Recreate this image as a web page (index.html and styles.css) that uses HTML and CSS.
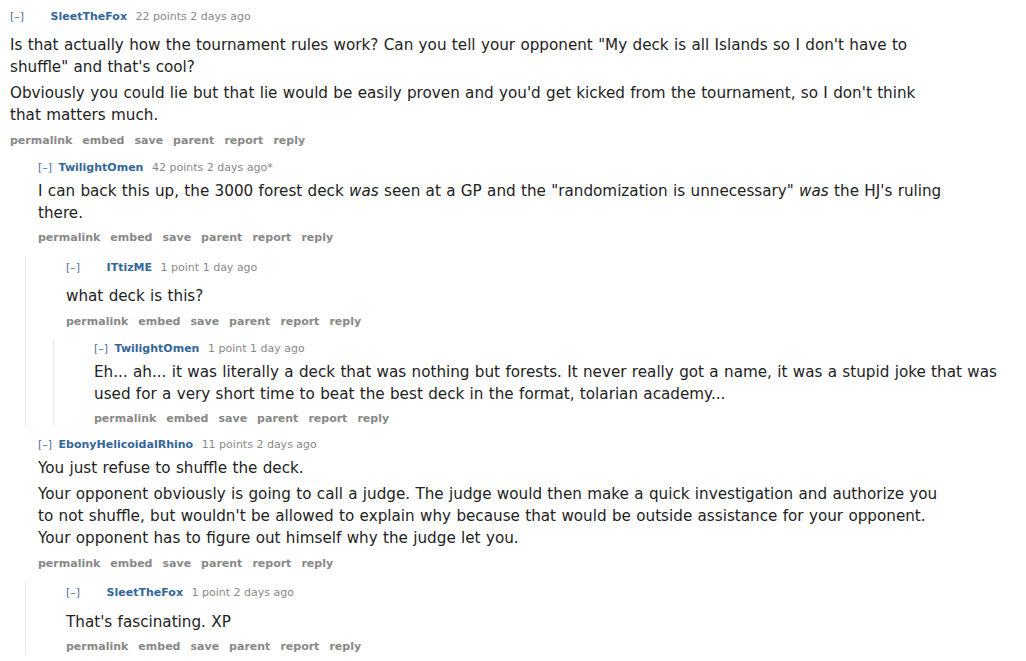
FILE: index.html
```html
<!DOCTYPE html>
<html>
<head>
<meta charset="utf-8">
<link rel="stylesheet" href="styles.css">
</head>
<body>
<div class="sitetable">

<div class="comment">
<div class="entry wide">
<p class="tagline"><a class="expand">[–]</a> <a class="author">SleetTheFox</a> <span>22 points</span> <span>2 days ago</span></p>
<div class="md">
<p>Is that actually how the tournament rules work? Can you tell your opponent "My deck is all Islands so I don't have to shuffle" and that's cool?</p>
<p>Obviously you could lie but that lie would be easily proven and you'd get kicked from the tournament, so I don't think that matters much.</p>
</div>
<ul class="buttons"><li>permalink</li><li>embed</li><li>save</li><li>parent</li><li>report</li><li>reply</li></ul>
</div>
<div class="child">

<div class="comment">
<div class="entry">
<p class="tagline"><a class="expand">[–]</a> <a class="author">TwilightOmen</a> <span>42 points</span> <span>2 days ago*</span></p>
<div class="md">
<p>I can back this up, the 3000 forest deck <em>was</em> seen at a GP and the "randomization is unnecessary" <em>was</em> the HJ's ruling there.</p>
</div>
<ul class="buttons"><li>permalink</li><li>embed</li><li>save</li><li>parent</li><li>report</li><li>reply</li></ul>
</div>
<div class="child">

<div class="comment">
<div class="entry wide">
<p class="tagline"><a class="expand">[–]</a> <a class="author">ITtizME</a> <span>1 point</span> <span>1 day ago</span></p>
<div class="md">
<p>what deck is this?</p>
</div>
<ul class="buttons"><li>permalink</li><li>embed</li><li>save</li><li>parent</li><li>report</li><li>reply</li></ul>
</div>
<div class="child">

<div class="comment">
<div class="entry">
<p class="tagline"><a class="expand">[–]</a> <a class="author">TwilightOmen</a> <span>1 point</span> <span>1 day ago</span></p>
<div class="md">
<p>Eh... ah... it was literally a deck that was nothing but forests. It never really got a name, it was a stupid joke that was used for a very short time to beat the best deck in the format, tolarian academy...</p>
</div>
<ul class="buttons"><li>permalink</li><li>embed</li><li>save</li><li>parent</li><li>report</li><li>reply</li></ul>
</div>
</div>

</div>
</div>

</div>
</div>

<div class="comment">
<div class="entry">
<p class="tagline"><a class="expand">[–]</a> <a class="author">EbonyHelicoidalRhino</a> <span>11 points</span> <span>2 days ago</span></p>
<div class="md">
<p>You just refuse to shuffle the deck.</p>
<p>Your opponent obviously is going to call a judge. The judge would then make a quick investigation and authorize you to not shuffle, but wouldn't be allowed to explain why because that would be outside assistance for your opponent. Your opponent has to figure out himself why the judge let you.</p>
</div>
<ul class="buttons"><li>permalink</li><li>embed</li><li>save</li><li>parent</li><li>report</li><li>reply</li></ul>
</div>
<div class="child">

<div class="comment">
<div class="entry wide">
<p class="tagline"><a class="expand">[–]</a> <a class="author">SleetTheFox</a> <span>1 point</span> <span>2 days ago</span></p>
<div class="md">
<p>That's fascinating. XP</p>
</div>
<ul class="buttons"><li>permalink</li><li>embed</li><li>save</li><li>parent</li><li>report</li><li>reply</li></ul>
</div>
</div>

</div>
</div>

</div>
</div>

</div>
</body>
</html>
```

FILE: styles.css
```css
body {
margin: 0;
background: #fff;
overflow: hidden;
font-family: "DejaVu Sans", Verdana, sans-serif;
}

.sitetable {
margin-left: -3px;
padding-top: 5px;
}

.comment {
padding-top: 1px;
}

.comment + .comment {
margin-top: 10px;
}

.entry {
padding-left: 13px;
}

.tagline {
margin: 0 0 5px;
font-size: 11px;
line-height: 15px;
color: #888;
}

.wide .tagline {
padding-top: 2.5px;
margin-bottom: 10.5px;
}

.expand {
color: #4f6f99;
margin-right: 3px;
}

.wide .expand {
margin-right: 23px;
}

.author {
color: #369;
font-weight: bold;
margin-right: 5px;
}

.md {
max-width: 918px;
font-size: 15.2px;
line-height: 22px;
color: #222;
word-spacing: 0.5px;
}

.md p {
margin: 0;
}

.md p + p {
margin-top: 4px;
}

.buttons {
display: flex;
gap: 10px;
list-style: none;
margin: 6.5px 0 0;
padding: 0;
font-size: 11px;
line-height: 15px;
font-weight: bold;
color: #888;
}

.child {
margin-top: 11px;
border-left: 1px solid #e9e9e9;
padding-left: 27px;
}
```
